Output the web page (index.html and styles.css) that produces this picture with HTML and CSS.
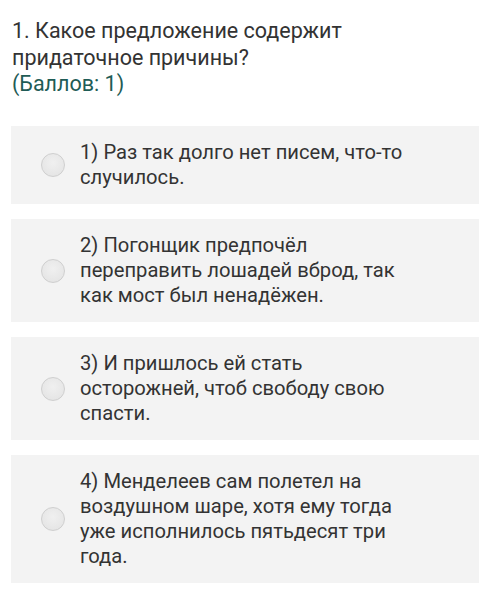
FILE: index.html
```html
<!DOCTYPE html>
<html lang="ru">
<head>
<meta charset="utf-8">
<link rel="stylesheet" href="styles.css">
</head>
<body>
<div class="page">
  <div class="question">
    <div class="q-text">1. Какое предложение содержит придаточное причины?</div>
    <div class="q-score">(Баллов: 1)</div>
  </div>
  <div class="options">
    <label class="option"><span class="radio"></span><span class="opt-text">1) Раз так долго нет писем, что-то случилось.</span></label>
    <label class="option"><span class="radio"></span><span class="opt-text">2) Погонщик предпочёл переправить лошадей вброд, так как мост был ненадёжен.</span></label>
    <label class="option"><span class="radio"></span><span class="opt-text">3) И пришлось ей стать осторожней, чтоб свободу свою спасти.</span></label>
    <label class="option"><span class="radio"></span><span class="opt-text">4) Менделеев сам полетел на воздушном шаре, хотя ему тогда уже исполнилось пятьдесят три года.</span></label>
  </div>
</div>
</body>
</html>
```
FILE: styles.css
```css
html, body {
  margin: 0;
  padding: 0;
  background: #ffffff;
}
.page {
  font-family: Roboto, "Noto Sans", sans-serif;
  padding: 18px 21px 0 11px;
}
.question {
  padding-left: 1px;
  font-size: 21.5px;
  line-height: 26.7px;
  color: #333333;
  width: 360px;
}
.q-score {
  color: #1f5c56;
}
.options {
  margin-top: 28px;
  display: flex;
  flex-direction: column;
  gap: 15px;
}
.option {
  display: flex;
  align-items: center;
  background: #f3f3f3;
  padding: 14px 0 14px 30px;
}
.radio {
  flex: none;
  width: 22px;
  height: 22px;
  border-radius: 50%;
  border: 1px solid #cfcfcf;
  background: radial-gradient(circle at 50% 40%, #f0f0f0 0%, #e6e6e6 70%, #dedede 100%);
  margin-right: 15px;
}
.opt-text {
  font-size: 20.2px;
  line-height: 25px;
  color: #333333;
  width: 330px;
}
```
